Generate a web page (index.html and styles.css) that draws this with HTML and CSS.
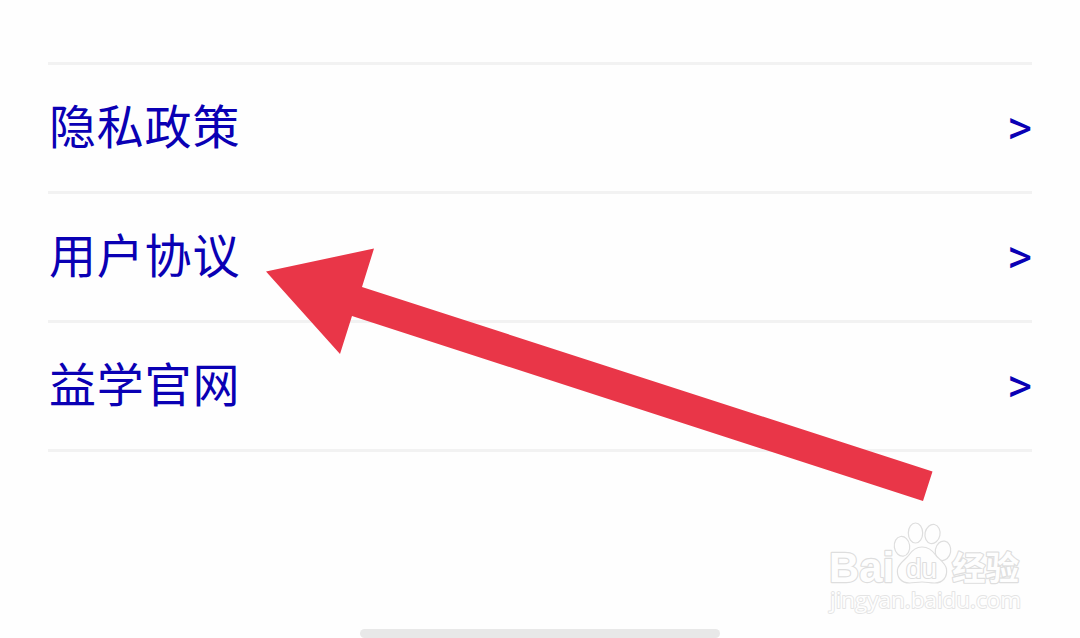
FILE: index.html
```
<!DOCTYPE html>
<html lang="zh-CN">
<head>
    <meta charset="UTF-8">
    <meta name="viewport" content="width=device-width, initial-scale=1.0">
    <title>用户协议</title>
    <link rel="stylesheet" href="styles.css">
</head>
<body>
    <nav class="menu">
        <a class="menu-item" href="#"><span class="label">隐私政策</span><span class="chevron">&gt;</span></a>
        <a class="menu-item" href="#"><span class="label">用户协议</span><span class="chevron">&gt;</span></a>
        <a class="menu-item" href="#"><span class="label">益学官网</span><span class="chevron">&gt;</span></a>
    </nav>

    <div class="home-bar"></div>

    <svg class="overlay" viewBox="0 0 1080 638">
        <!-- arrow -->
        <polygon class="arrow" points="266,271.5 374,248.5 362,287 932.5,471.5 923,501 352,316 340,354" />

        <!-- watermark -->
        <g class="watermark">
            <text class="logo" x="829" y="581.5" textLength="65" lengthAdjust="spacingAndGlyphs">Bai</text>
            <ellipse cx="902" cy="546.3" rx="7.7" ry="9.9" transform="rotate(-8 902 546.3)" />
            <ellipse cx="915.5" cy="533" rx="7.2" ry="10" />
            <ellipse cx="932.5" cy="534" rx="7.5" ry="9.7" transform="rotate(12 932.5 534)" />
            <ellipse cx="943" cy="550.8" rx="7.7" ry="9.8" transform="rotate(10 943 550.8)" />
            <path d="M922 547c-7 0-10.5 4-13.5 8.5-3 4-10 8-11 14-1 8 4 13.500 12 13.500 4 0 8-1 12.500-1s8 1 12.500 1c8.500 0 13-6 12-14-1-6-7-9.500-10.500-13.500-3-4.500-7-8.500-14-8.500z" />
            <text class="du" x="906" y="578" textLength="31" lengthAdjust="spacingAndGlyphs">du</text>
            <text class="cn" x="952" y="580" textLength="67" lengthAdjust="spacingAndGlyphs">经验</text>
            <text class="site" x="830" y="608" textLength="191" lengthAdjust="spacingAndGlyphs">jingyan.baidu.com</text>
        </g>
    </svg>
</body>
</html>
```
FILE: styles.css
```
* {
    margin: 0;
    padding: 0;
    box-sizing: border-box;
}

body {
    background: #fefefe;
    height: 638px;
    padding: 62px 48px 0;
    display: flex;
    flex-direction: column;
    position: relative;
    overflow: hidden;
    font-family: Roboto, "Noto Sans CJK SC", sans-serif;
}

.menu {
    border-top: 3px solid #f2f2f2;
}

.menu-item {
    display: flex;
    justify-content: space-between;
    align-items: center;
    height: 129px;
    border-bottom: 3px solid #f2f2f2;
    color: #0a00b4;
    font-size: 48px;
    line-height: 60px;
    text-decoration: none;
}

.label {
    padding-left: 1px;
    font-size: 47px;
    letter-spacing: 0.8px;
}

.chevron {
    font-weight: 400;
}

.home-bar {
    width: 360px;
    height: 9px;
    margin: auto auto 0;
    border-radius: 5px;
    background: #e8e8e8;
}

.overlay {
    position: absolute;
    top: 0;
    left: 0;
    width: 1080px;
    height: 638px;
    pointer-events: none;
}

.arrow {
    fill: #e93648;
}

.watermark {
    fill: #fefefe;
    stroke: #dedede;
    stroke-width: 1.2;
}

.watermark text {
    font-family: "Liberation Sans", sans-serif;
    font-weight: bold;
    stroke-linejoin: round;
}

.watermark .logo {
    font-size: 42px;
    paint-order: stroke;
    stroke-width: 2.4;
}

.watermark .du {
    font-size: 27px;
    font-weight: normal;
    paint-order: stroke;
    stroke-width: 2.2;
}

.watermark .cn {
    font-family: "Noto Sans CJK SC", sans-serif;
    font-weight: bold;
    font-size: 33px;
    paint-order: stroke;
    stroke-width: 2.4;
}

.watermark .site {
    font-family: "Open Sans", sans-serif;
    font-weight: normal;
    font-size: 22px;
    paint-order: stroke;
    stroke: #e4e4e4;
    stroke-width: 1.8;
}
```
